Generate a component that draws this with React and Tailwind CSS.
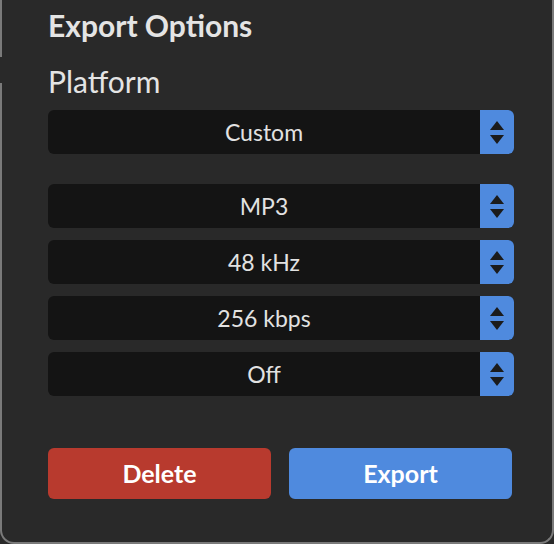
import React from 'react'

const options = ['MP3', '48 kHz', '256 kbps', 'Off']

const Select = ({ value }) => {
  return (
    <div className="flex h-[44px] rounded-md bg-[#141414]">
      <div className="flex flex-1 items-center justify-center text-[23px] text-[#e2e2e2]">{value}</div>
      <div className="flex w-[34px] flex-col items-center justify-center gap-[5px] rounded-r-md bg-[#4f8ade]">
        <svg width="14" height="9" viewBox="0 0 14 9"><path d="M7 0 L14 9 L0 9 Z" fill="#1b1b1b" /></svg>
        <svg width="14" height="9" viewBox="0 0 14 9"><path d="M0 0 L14 0 L7 9 Z" fill="#1b1b1b" /></svg>
      </div>
    </div>
  )
}

const App = () => {
  return (
    <div className="h-[544px] w-[554px] bg-[#292929]" style={{ fontFamily: 'Lato, "Noto Sans", sans-serif' }}>
      <div className="relative h-full rounded-b-[14px] border-x-2 border-b-2 border-[#7a7a7a] pl-[46px] pr-[38px] pt-[9px]">
        {/* notch in left border */}
        <div className="absolute -left-[2px] top-[57px] h-[26px] w-[2px] bg-[#292929]"></div>
        <h2 className="text-[30px] font-bold leading-[32px] text-[#e4e4e4]">Export Options</h2>
        <div className="mt-[24px] text-[30px] leading-[32px] text-[#e4e4e4]">Platform</div>
        <div className="mt-[13px]">
          <Select value="Custom" />
        </div>
        <div className="mt-[30px] flex flex-col gap-[12px]">
          {options.map((o) => (
            <Select key={o} value={o} />
          ))}
        </div>
        <div className="mr-[2px] mt-[52px] flex gap-[18px]">
          <button className="h-[51px] flex-1 rounded-md bg-[#b83a2e] text-[25px] font-bold text-white">Delete</button>
          <button className="h-[51px] flex-1 rounded-md bg-[#4f8ade] text-[25px] font-bold text-white">Export</button>
        </div>
      </div>
    </div>
  )
}

export default App
